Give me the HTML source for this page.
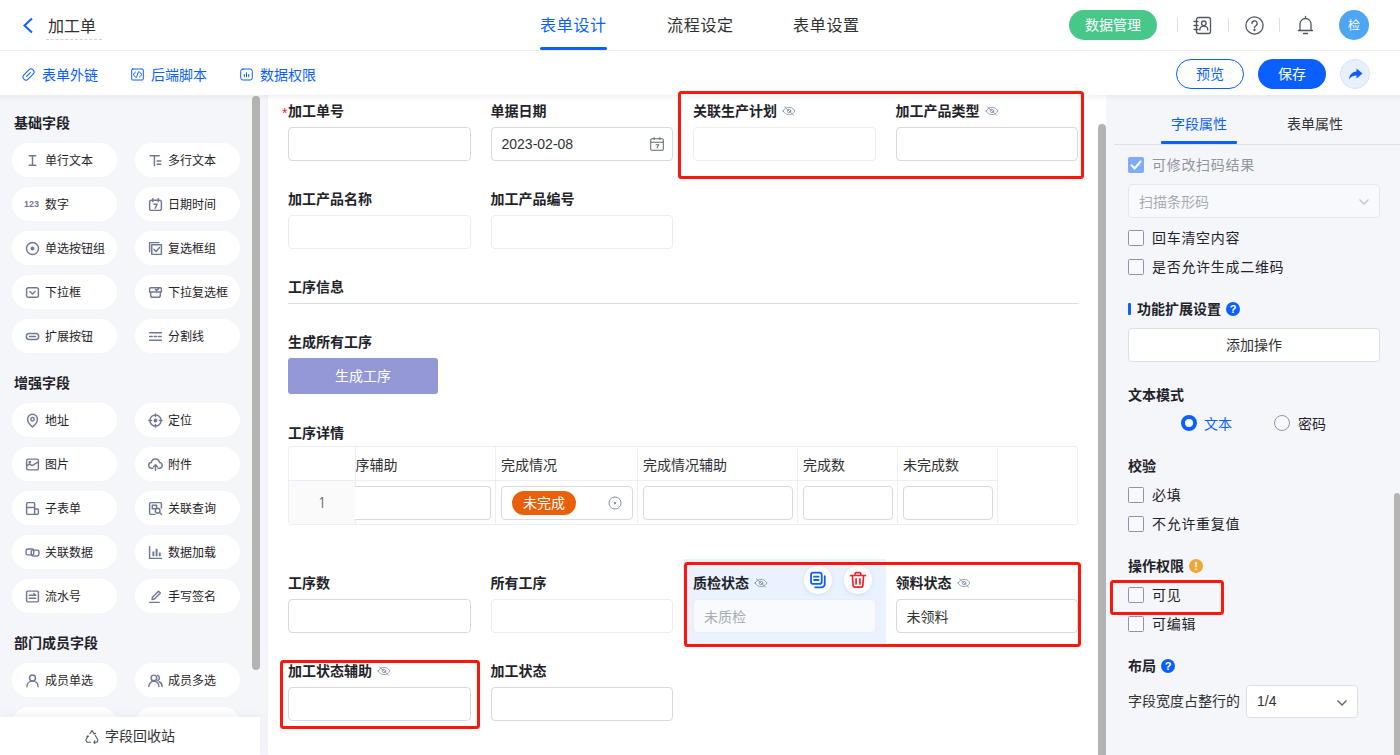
<!DOCTYPE html>
<html lang="zh-CN">
<head>
<meta charset="utf-8">
<title>加工单</title>
<style>
*{box-sizing:border-box;margin:0;padding:0}
html,body{width:1400px;height:755px;overflow:hidden}
body{font-family:"Liberation Sans","Noto Sans CJK SC",sans-serif;font-size:14px;color:#1f2329;background:#f5f6fa;position:relative}
.abs{position:absolute}
/* header */
#hdr{position:absolute;left:0;top:0;width:1400px;height:51px;background:#fff;border-bottom:1px solid #eeeff1}
#hdr .title{position:absolute;left:46px;top:12px;width:56px;height:28px;line-height:29px;font-size:16px;color:#303133;padding:0 2px;border-bottom:1px dashed #d0d3d9}
.tab{position:absolute;top:0;height:50px;line-height:52.500px;font-size:16px;color:#303133;white-space:nowrap;letter-spacing:.7px}
.tab.on{color:#0b5fff}
.tab.on:after{content:"";position:absolute;left:0;right:0;bottom:0;height:3px;background:#0b5fff;border-radius:2px}
#dm{position:absolute;left:1069px;top:10px;width:88px;height:30px;border-radius:15px;background:#48c78a;color:#fff;font-size:14px;line-height:31.500px;text-align:center}
.vsep{position:absolute;top:18px;width:1px;height:14px;background:#dcdfe6}
#ava{position:absolute;left:1339px;top:10px;width:30px;height:30px;border-radius:50%;background:#4ea5f2;color:#fff;font-size:12px;line-height:33px;text-align:center}
/* toolbar */
#tb{position:absolute;left:0;top:51px;width:1400px;height:44px;background:#fff}
#shd{position:absolute;left:0;top:95px;width:1400px;height:6px;background:linear-gradient(rgba(0,0,0,.045),rgba(0,0,0,0))}
.lnk{position:absolute;top:0;height:45px;line-height:48px;color:#0b5fff;font-size:14px;white-space:nowrap}
.lnk svg{position:absolute;left:-20px;top:17px}
#pv{position:absolute;left:1176px;top:8px;width:68px;height:30px;border-radius:15px;border:1px solid #0b5fff;color:#0b5fff;line-height:28px;text-align:center;background:#fff}
#sv{position:absolute;left:1258px;top:8px;width:68px;height:30px;border-radius:15px;background:#0b5fff;color:#fff;line-height:30px;text-align:center}
#sh{position:absolute;left:1340px;top:8px;width:30px;height:30px;border-radius:50%;background:#e8f0ff;border:1px solid #d5e3ff}
/* left */
#left{position:absolute;left:0;top:96px;width:260px;height:659px;overflow:hidden}
#left h4{position:absolute;left:14px;font-size:14px;font-weight:bold;color:#1f2329;line-height:20px}
.pill{position:absolute;width:105px;height:34px;border-radius:17px;background:#fff;font-size:12px;line-height:34px;color:#1f2329;padding-left:33px;padding-top:1px;white-space:nowrap}
.pill svg{position:absolute;left:12.500px;top:9.500px}
#lsb{position:absolute;left:252px;top:96px;width:8px;height:574px;border-radius:4px;background:#b3b3b3}
#recy{position:absolute;left:0;top:717px;width:260px;height:38px;background:#fff;font-size:14px;line-height:39px;color:#303133;box-shadow:0 -3px 8px rgba(0,0,0,.045)}
/* canvas */
#cv{position:absolute;left:268px;top:95px;width:838px;height:660px;background:#fff;box-shadow:-2px 0 4px rgba(0,0,0,.02)}
#csb{position:absolute;left:1098px;top:124px;width:8px;height:640px;border-radius:4px;background:#b3b3b3}
.lab{position:absolute;font-size:14px;font-weight:bold;color:#1f2329;line-height:20px;white-space:nowrap}
.inp{position:absolute;width:182.500px;height:34px;border:1px solid #d9dadd;border-radius:4px;background:#fff;font-size:14px;line-height:32px;padding-left:10px;color:#303133}
.inp.lt{border-color:#ebedf0}
.eye{margin-left:5px;vertical-align:0}
.cj{position:relative;top:1px}
.th{font-size:14px;line-height:20px;color:#303133;white-space:nowrap}
.tag{position:absolute;left:10px;top:4px;width:64px;height:24px;border-radius:12px;background:#e8600a;color:#fff;line-height:25px;text-align:center;font-size:14px}
.red{position:absolute;border:3px solid #fd160e;border-radius:3.500px;z-index:10}
/* right */
#right{position:absolute;left:1106px;top:95px;width:294px;height:660px;background:#f5f6fa}
#right .abs{white-space:nowrap}
.cb{position:absolute;left:1128px;width:16px;height:16px;border:1px solid #8d94b0;border-radius:1.500px;background:#f8f9fc}
.cbl{position:absolute;left:1152px;font-size:14px;line-height:20px;color:#1f2329;white-space:nowrap;letter-spacing:.7px}
.h5{position:absolute;left:1128px;font-size:14px;font-weight:bold;line-height:20px;color:#1f2329;white-space:nowrap}
</style>
</head>
<body>
<div id="hdr">
  <svg class="abs" style="left:22px;top:17px" width="12" height="17" viewBox="0 0 12 17"><path d="M10 1.5 L2.5 8.5 L10 15.5" fill="none" stroke="#0b5fff" stroke-width="2"/></svg>
  <div class="title">加工单</div>
  <div class="tab on" style="left:540px">表单设计</div>
  <div class="tab" style="left:667px">流程设定</div>
  <div class="tab" style="left:793px">表单设置</div>
  <div id="dm">数据管理</div>
  <div class="vsep" style="left:1177px"></div>
  <div class="vsep" style="left:1228px"></div>
  <div class="vsep" style="left:1279px"></div>
  <svg class="abs" style="left:1193px;top:16px" width="19" height="19" viewBox="0 0 19 19" fill="none" stroke="#4e5564" stroke-width="1.300" stroke-linecap="round" stroke-linejoin="round"><rect x="3.500" y="1.500" width="14" height="16" rx="2"/><path d="M1 5.500h4M1 9.500h4M1 13.500h4"/><circle cx="10.800" cy="7.300" r="2.300"/><path d="M6.800 14c0-2.400 1.700-3.900 4-3.900s4 1.500 4 3.900"/></svg>
  <svg class="abs" style="left:1245px;top:16px" width="19" height="19" viewBox="0 0 19 19" fill="none" stroke="#4e5564" stroke-width="1.300" stroke-linecap="round" stroke-linejoin="round"><circle cx="9.500" cy="9.500" r="8.600"/><path d="M6.900 7.600a2.600 2.600 0 1 1 3.900 2.200c-.8.500-1.300 1-1.300 2"/><circle cx="9.500" cy="14" r=".5" fill="#4e5564"/></svg>
  <svg class="abs" style="left:1296px;top:15px" width="19" height="20" viewBox="0 0 19 20" fill="none" stroke="#4e5564" stroke-width="1.300" stroke-linecap="round" stroke-linejoin="round"><path d="M2.500 15.500h14M4 15.500v-6.500a5.500 5.500 0 0 1 11 0v6.500M9.500 1.500v2M7.500 18.500h4"/></svg>
  <div id="ava">检</div>
</div>
<div id="tb">
  <div class="lnk" style="left:42px"><svg width="13" height="13" viewBox="0 0 13 13" fill="none" stroke="#0b5fff" stroke-width="1" stroke-linecap="round"><g transform="rotate(-45 6.500 6.500)"><rect x="0" y="3.500" width="13" height="6" rx="3"/><path d="M3.800 6.500h5.400"/></g></svg>表单外链</div>
  <div class="lnk" style="left:151px"><svg width="13" height="13" viewBox="0 0 13 13" fill="none" stroke="#0b5fff" stroke-width="1" stroke-linecap="round" stroke-linejoin="round"><rect x=".7" y="1" width="11.600" height="11" rx="1"/><path d="M4.600 4l-2.600 2.500 2.600 2.500M8.400 4l2.600 2.500-2.600 2.500M7.500 3.800l-2 5.400"/></svg>后端脚本</div>
  <div class="lnk" style="left:260px"><svg width="13" height="13" viewBox="0 0 13 13" fill="none" stroke="#0b5fff" stroke-width="1" stroke-linecap="round" stroke-linejoin="round"><rect x=".7" y="1" width="11.600" height="11" rx="2.200"/><path d="M4.300 6.500v2.300M6.500 4.800v4M8.700 6.500v2.300"/></svg>数据权限</div>
  <div id="pv">预览</div>
  <div id="sv">保存</div>
  <div id="sh"><svg class="abs" style="left:7px;top:7px" width="15" height="15" viewBox="0 0 15 15"><path d="M8.500 1.500l6 5-6 5v-3c-3.500 0-6 1.200-7.500 4 .3-4.500 3-7.600 7.500-8z" fill="#0b5fff"/></svg></div>
</div>
<div id="shd" style="z-index:5"></div>
<div id="left">
<h4 style="top:17px">基础字段</h4>
<div class="pill" style="left:12px;top:47px"><svg width="15" height="15" viewBox="0 0 14 14" fill="none" stroke="#717895" stroke-width="1.35" stroke-linecap="round" stroke-linejoin="round"><path d="M4 2.5h6M7 2.5v9M4 11.5h6"/></svg>单行文本</div>
<div class="pill" style="left:135px;top:47px"><svg width="15" height="15" viewBox="0 0 14 14" fill="none" stroke="#717895" stroke-width="1.35" stroke-linecap="round" stroke-linejoin="round"><path d="M2 2.5h8.5M6 2.5v9.5M8.5 7.5h3.5M8.5 10.5h3.5"/></svg>多行文本</div>
<div class="pill" style="left:12px;top:91px"><b style="position:absolute;left:12px;top:0;font-size:9px;font-weight:bold;color:#717895;letter-spacing:0">123</b>数字</div>
<div class="pill" style="left:135px;top:91px"><svg width="15" height="15" viewBox="0 0 14 14" fill="none" stroke="#717895" stroke-width="1.35" stroke-linecap="round" stroke-linejoin="round"><path d="M3 3h8a1.5 1.5 0 0 1 1.5 1.5v6.5a1.5 1.5 0 0 1-1.5 1.5h-8a1.5 1.5 0 0 1-1.5-1.5v-6.5a1.5 1.5 0 0 1 1.5-1.5zM4.5 1.5v3M9.5 1.5v3M5.5 6.8h3l-1.8 3.7"/></svg>日期时间</div>
<div class="pill" style="left:12px;top:135px"><svg width="15" height="15" viewBox="0 0 14 14" fill="none" stroke="#717895" stroke-width="1.35" stroke-linecap="round" stroke-linejoin="round"><circle cx="7" cy="7" r="5.6"/><circle cx="7" cy="7" r="1.2" fill="#717895"/></svg>单选按钮组</div>
<div class="pill" style="left:135px;top:135px"><svg width="15" height="15" viewBox="0 0 14 14" fill="none" stroke="#717895" stroke-width="1.35" stroke-linecap="round" stroke-linejoin="round"><path d="M3.5 3.5h9v9h-9zM1.5 10v-8.5h8.5M5.5 7.8l2 2 3.2-3.8"/></svg>复选框组</div>
<div class="pill" style="left:12px;top:179px"><svg width="15" height="15" viewBox="0 0 14 14" fill="none" stroke="#717895" stroke-width="1.35" stroke-linecap="round" stroke-linejoin="round"><path d="M3 2.5h8a1.5 1.5 0 0 1 1.5 1.5v6a1.5 1.5 0 0 1-1.5 1.5h-8a1.5 1.5 0 0 1-1.5-1.5v-6a1.5 1.5 0 0 1 1.5-1.5zM4.6 6l2.4 2.4 2.4-2.4"/></svg>下拉框</div>
<div class="pill" style="left:135px;top:179px"><svg width="15" height="15" viewBox="0 0 14 14" fill="none" stroke="#717895" stroke-width="1.35" stroke-linecap="round" stroke-linejoin="round"><path d="M2.5 2.5h9a1 1 0 0 1 1 1v3h-11v-3a1 1 0 0 1 1-1zM2.5 6.5v3a2 2 0 0 0 2 2h5a2 2 0 0 0 2-2v-3M7 4.2l1 1 1.8-1.6"/></svg>下拉复选框</div>
<div class="pill" style="left:12px;top:223px"><svg width="15" height="15" viewBox="0 0 14 14" fill="none" stroke="#717895" stroke-width="1.35" stroke-linecap="round" stroke-linejoin="round"><rect x="1.2" y="4.2" width="11.6" height="5.6" rx="2.8"/><path d="M4.2 7h5.6"/></svg>扩展按钮</div>
<div class="pill" style="left:135px;top:223px"><svg width="15" height="15" viewBox="0 0 14 14" fill="none" stroke="#717895" stroke-width="1.35" stroke-linecap="round" stroke-linejoin="round"><path d="M1.5 3.5h11M1.5 10.5h11"/><path d="M1.5 7h11" stroke-dasharray="2.4 1.8"/></svg>分割线</div>
<h4 style="top:277px">增强字段</h4>
<div class="pill" style="left:12px;top:307px"><svg width="15" height="15" viewBox="0 0 14 14" fill="none" stroke="#717895" stroke-width="1.35" stroke-linecap="round" stroke-linejoin="round"><path d="M7 13s-4.6-3.6-4.6-7.2a4.6 4.6 0 0 1 9.2 0c0 3.600-4.600 7.200-4.600 7.200z"/><circle cx="7" cy="5.800" r="1.600"/></svg>地址</div>
<div class="pill" style="left:135px;top:307px"><svg width="15" height="15" viewBox="0 0 14 14" fill="none" stroke="#717895" stroke-width="1.35" stroke-linecap="round" stroke-linejoin="round"><circle cx="7" cy="7" r="5.200"/><circle cx="7" cy="7" r="1.100" fill="#717895"/><path d="M7 .8v2.600M7 10.600v2.600M.8 7h2.600M10.600 7h2.600"/></svg>定位</div>
<div class="pill" style="left:12px;top:351px"><svg width="15" height="15" viewBox="0 0 14 14" fill="none" stroke="#717895" stroke-width="1.35" stroke-linecap="round" stroke-linejoin="round"><path d="M3 2h8a1.500 1.500 0 0 1 1.500 1.500v7a1.500 1.500 0 0 1-1.500 1.500h-8a1.500 1.500 0 0 1-1.500-1.500v-7a1.500 1.500 0 0 1 1.500-1.500zM1.500 8.500l2.500-2 2.500 1.500 6-3.500"/><circle cx="4.500" cy="4.800" r=".6" fill="#717895"/></svg>图片</div>
<div class="pill" style="left:135px;top:351px"><svg width="15" height="15" viewBox="0 0 14 14" fill="none" stroke="#717895" stroke-width="1.35" stroke-linecap="round" stroke-linejoin="round"><path d="M4.500 10.500h-1a2.700 2.700 0 0 1-.3-5.400a3.800 3.800 0 0 1 7.500 0a2.700 2.700 0 0 1-.2 5.400h-1M7 12.500v-5M5.200 9l1.800-1.800 1.800 1.800"/></svg>附件</div>
<div class="pill" style="left:12px;top:395px"><svg width="15" height="15" viewBox="0 0 14 14" fill="none" stroke="#717895" stroke-width="1.35" stroke-linecap="round" stroke-linejoin="round"><path d="M2.500 1.500h5.500a1 1 0 0 1 1 1v10h-6.500a1 1 0 0 1-1-1v-9a1 1 0 0 1 1-1zM1.500 6h7.500M9 7.500h2.500a1 1 0 0 1 1 1v3a1 1 0 0 1-1 1h-2.500"/></svg>子表单</div>
<div class="pill" style="left:135px;top:395px"><svg width="15" height="15" viewBox="0 0 14 14" fill="none" stroke="#717895" stroke-width="1.35" stroke-linecap="round" stroke-linejoin="round"><path d="M12.500 6.500v-4a1 1 0 0 0-1-1h-9a1 1 0 0 0-1 1v9a1 1 0 0 0 1 1h4M4 4h4v3.200h-4z"/><circle cx="9" cy="9" r="2.200"/><path d="M10.700 10.700l2 2"/></svg>关联查询</div>
<div class="pill" style="left:12px;top:439px"><svg width="15" height="15" viewBox="0 0 14 14" fill="none" stroke="#717895" stroke-width="1.35" stroke-linecap="round" stroke-linejoin="round"><rect x="1" y="3.800" width="7.200" height="5.400" rx="1.600"/><rect x="5.800" y="4.800" width="7.200" height="5.400" rx="1.600"/></svg>关联数据</div>
<div class="pill" style="left:135px;top:439px"><svg width="15" height="15" viewBox="0 0 14 14" fill="none" stroke="#717895" stroke-width="1.35" stroke-linecap="round" stroke-linejoin="round"><path d="M1.500 1.500v11h11"/><path d="M5 6v4.500M8 3.500v7M11 7v3.500" stroke-width="1.800" stroke-linecap="butt"/></svg>数据加载</div>
<div class="pill" style="left:12px;top:483px"><svg width="15" height="15" viewBox="0 0 14 14" fill="none" stroke="#717895" stroke-width="1.35" stroke-linecap="round" stroke-linejoin="round"><path d="M2.500 2h9a1 1 0 0 1 1 1v8a1 1 0 0 1-1 1h-9a1 1 0 0 1-1-1v-8a1 1 0 0 1 1-1zM4 5.800h6M4 8.600h6M8.300 4.200l1.700 1.600"/></svg>流水号</div>
<div class="pill" style="left:135px;top:483px"><svg width="15" height="15" viewBox="0 0 14 14" fill="none" stroke="#717895" stroke-width="1.35" stroke-linecap="round" stroke-linejoin="round"><path d="M1.500 12.500h9M3.800 9.800l.4-2.200 5.600-5.600 1.800 1.800-5.600 5.600z"/></svg>手写签名</div>
<h4 style="top:537px">部门成员字段</h4>
<div class="pill" style="left:12px;top:567px"><svg width="15" height="15" viewBox="0 0 14 14" fill="none" stroke="#717895" stroke-width="1.35" stroke-linecap="round" stroke-linejoin="round"><circle cx="7" cy="4.600" r="2.800"/><path d="M1.800 12.800c0-3.200 2.300-5.200 5.200-5.200s5.200 2 5.200 5.200"/></svg>成员单选</div>
<div class="pill" style="left:135px;top:567px"><svg width="15" height="15" viewBox="0 0 14 14" fill="none" stroke="#717895" stroke-width="1.35" stroke-linecap="round" stroke-linejoin="round"><circle cx="5.500" cy="4.600" r="2.600"/><path d="M.8 12.600c0-3 2.100-4.900 4.700-4.900s4.700 1.900 4.700 4.900M9 2.200a2.600 2.600 0 0 1 0 4.800M10.300 8.200c1.700.6 2.900 2.100 2.900 4.400"/></svg>成员多选</div>
<div class="pill" style="left:12px;top:611px"></div><div class="pill" style="left:135px;top:611px"></div>
</div>
<div id="lsb"></div>
<div id="recy"><svg class="abs" style="left:84px;top:12px" width="16" height="15" viewBox="0 0 16 15" fill="none" stroke="#4e5564" stroke-width="1.100" stroke-linecap="round" stroke-linejoin="round"><path d="M6 4.500l2-3 2 3.200M11.300 6.500l2.700 4.500-1 2.200h-3M6.500 13.200h-3.500l-1.200-2.200 2.300-4M9.500 3.600l.8 1.300 1.400-.6M4.700 7.200l-1.500-.1-.3 1.500M10.800 11.800l-.9 1.400.9 1.300"/></svg><span class="abs" style="left:105px;top:0">字段回收站</span></div>
<div id="cv"></div>
<!--CV-->
<div class="abs" style="left:683px;top:559px;width:203px;height:87px;background:#eaf2ff"></div>
<div class="lab" style="left:288px;top:101px"><span style="color:#f5222d;position:absolute;left:-6px;top:2px;font-weight:normal">*</span>加工单号</div>
<div class="inp " style="left:288px;top:127px;width:182.5px;"></div>
<div class="lab" style="left:490.5px;top:101px">单据日期</div>
<div class="inp " style="left:490.5px;top:127px;width:182.5px;">2023-02-08<svg class="abs" style="right:7px;top:8px" width="16" height="16" viewBox="0 0 14 14" fill="none" stroke="#5f6676" stroke-width=".9"><path d="M2.500 2.500h9a1 1 0 0 1 1 1v8a1 1 0 0 1-1 1h-9a1 1 0 0 1-1-1v-8a1 1 0 0 1 1-1zM4.500 1v2.500M9.500 1v2.500M1.500 5.500h11M5.800 7.600h2.600l-1.500 3.200"/></svg></div>
<div class="lab" style="left:693px;top:101px">关联生产计划<svg class="eye" width="14" height="10" viewBox="0 0 15 11" fill="none" stroke="#8d97ab" stroke-width="1" stroke-linecap="round"><path d="M1 5.500c1.600-2.700 3.800-4 6.500-4s4.900 1.300 6.500 4c-1.600 2.700-3.800 4-6.500 4s-4.900-1.300-6.500-4z"/><circle cx="7.500" cy="5.500" r="2"/><path d="M2.500 1l10 9"/></svg></div>
<div class="inp lt" style="left:693px;top:127px;width:182.5px;"></div>
<div class="lab" style="left:895.5px;top:101px">加工产品类型<svg class="eye" width="14" height="10" viewBox="0 0 15 11" fill="none" stroke="#8d97ab" stroke-width="1" stroke-linecap="round"><path d="M1 5.500c1.600-2.700 3.800-4 6.500-4s4.900 1.300 6.500 4c-1.600 2.700-3.800 4-6.500 4s-4.900-1.300-6.500-4z"/><circle cx="7.500" cy="5.500" r="2"/><path d="M2.500 1l10 9"/></svg></div>
<div class="inp " style="left:895.5px;top:127px;width:182.5px;"></div>
<div class="lab" style="left:288px;top:189px">加工产品名称</div>
<div class="inp lt" style="left:288px;top:215px;width:182.5px;"></div>
<div class="lab" style="left:490.5px;top:189px">加工产品编号</div>
<div class="inp lt" style="left:490.5px;top:215px;width:182.5px;"></div>
<div class="lab" style="left:288px;top:277px">工序信息</div>
<div class="abs" style="left:288px;top:303px;width:790px;height:1px;background:#dcdde1"></div>
<div class="lab" style="left:288px;top:332px">生成所有工序</div>
<div class="abs" style="left:288px;top:358px;width:150px;height:36px;border-radius:3px;background:#9499d5;color:#fff;font-size:14px;line-height:36px;text-align:center">生成工序</div>
<div class="lab" style="left:288px;top:423px">工序详情</div>
<div class="abs" style="left:288px;top:446px;width:790px;height:79px;border:1px solid #ebeef5;border-radius:3px"></div>
<div class="abs" style="left:289px;top:480px;width:709px;height:1px;background:#ebeef5"></div>
<div class="abs" style="left:289px;top:481px;width:66px;height:43px;background:#fafafa"></div>
<div class="abs" style="left:355px;top:447px;width:1px;height:77px;background:#ebeef5"></div>
<div class="abs" style="left:495px;top:447px;width:1px;height:77px;background:#ebeef5"></div>
<div class="abs" style="left:637px;top:447px;width:1px;height:77px;background:#ebeef5"></div>
<div class="abs" style="left:797px;top:447px;width:1px;height:77px;background:#ebeef5"></div>
<div class="abs" style="left:897px;top:447px;width:1px;height:77px;background:#ebeef5"></div>
<div class="abs" style="left:997px;top:447px;width:1px;height:77px;background:#ebeef5"></div>
<div class="abs th" style="left:355.5px;top:455px">序辅助</div>
<div class="abs th" style="left:501px;top:455px">完成情况</div>
<div class="abs th" style="left:643px;top:455px">完成情况辅助</div>
<div class="abs th" style="left:803px;top:455px">完成数</div>
<div class="abs th" style="left:903px;top:455px">未完成数</div>
<div class="abs th" style="left:302px;top:493px;width:40px;text-align:center;color:#606266;font-family:NanumGothic,sans-serif">1</div>
<div class="inp " style="left:355px;top:486px;width:136px;border-left:none;border-radius:0 4px 4px 0"></div>
<div class="inp " style="left:501px;top:486px;width:132px;"><span class="tag">未完成</span><svg class="abs" style="left:106px;top:9px" width="14" height="14" viewBox="0 0 14 14" fill="none" stroke="#8a919f" stroke-width="1"><circle cx="7" cy="7" r="6"/><circle cx="7" cy="7" r="1.200" fill="#8a919f" stroke="none"/></svg></div>
<div class="inp " style="left:643px;top:486px;width:150px;"></div>
<div class="inp " style="left:803px;top:486px;width:90px;"></div>
<div class="inp " style="left:903px;top:486px;width:90px;"></div>
<div class="lab" style="left:288px;top:573px">工序数</div>
<div class="inp " style="left:288px;top:599px;width:182.5px;"></div>
<div class="lab" style="left:490.5px;top:573px">所有工序</div>
<div class="inp lt" style="left:490.5px;top:599px;width:182.5px;"></div>
<div class="lab" style="left:693px;top:573px">质检状态<svg class="eye" width="14" height="10" viewBox="0 0 15 11" fill="none" stroke="#8d97ab" stroke-width="1" stroke-linecap="round"><path d="M1 5.500c1.600-2.700 3.800-4 6.500-4s4.900 1.300 6.500 4c-1.600 2.700-3.800 4-6.500 4s-4.900-1.300-6.500-4z"/><circle cx="7.500" cy="5.500" r="2"/><path d="M2.500 1l10 9"/></svg></div>
<div class="inp lt" style="left:693px;top:599px;width:182.5px;background:#f8fafd"><span class="cj" style="color:#a8abb2">未质检</span></div>
<div class="lab" style="left:895.5px;top:573px">领料状态<svg class="eye" width="14" height="10" viewBox="0 0 15 11" fill="none" stroke="#8d97ab" stroke-width="1" stroke-linecap="round"><path d="M1 5.500c1.600-2.700 3.800-4 6.500-4s4.900 1.300 6.500 4c-1.600 2.700-3.800 4-6.500 4s-4.900-1.300-6.500-4z"/><circle cx="7.500" cy="5.500" r="2"/><path d="M2.500 1l10 9"/></svg></div>
<div class="inp " style="left:895.5px;top:599px;width:182.5px;"><span class="cj">未领料</span></div>
<div class="lab" style="left:288px;top:661px">加工状态辅助<svg class="eye" width="14" height="10" viewBox="0 0 15 11" fill="none" stroke="#8d97ab" stroke-width="1" stroke-linecap="round"><path d="M1 5.500c1.600-2.700 3.800-4 6.500-4s4.900 1.300 6.500 4c-1.600 2.700-3.800 4-6.500 4s-4.900-1.300-6.500-4z"/><circle cx="7.500" cy="5.500" r="2"/><path d="M2.500 1l10 9"/></svg></div>
<div class="inp " style="left:288px;top:687px;width:182.5px;"></div>
<div class="lab" style="left:490.5px;top:661px">加工状态</div>
<div class="inp " style="left:490.5px;top:687px;width:182.5px;"></div>
<div class="abs" style="left:804px;top:566px;width:28px;height:28px;border-radius:50%;background:#fff;box-shadow:0 1px 4px rgba(11,95,255,.12)"><svg class="abs" style="left:5px;top:5px" width="18" height="18" viewBox="0 0 16 16" fill="none" stroke="#0b5fff" stroke-width="1.600" stroke-linecap="round" stroke-linejoin="round"><rect x="1.800" y="1.500" width="9.500" height="10" rx="2"/><path d="M4.500 5h4M4.500 8h4M14 4.500v7a3 3 0 0 1-3 3h-5.500"/></svg></div>
<div class="abs" style="left:844px;top:566px;width:28px;height:28px;border-radius:50%;background:#fff;box-shadow:0 1px 4px rgba(11,95,255,.12)"><svg class="abs" style="left:5px;top:5px" width="18" height="18" viewBox="0 0 16 16" fill="none" stroke="#f5222d" stroke-width="1.500" stroke-linecap="round" stroke-linejoin="round"><path d="M1.500 4h13M5.500 4v-1.500a1 1 0 0 1 1-1h3a1 1 0 0 1 1 1v1.500M3 4l.7 9a1.500 1.500 0 0 0 1.500 1.400h5.600a1.500 1.500 0 0 0 1.500-1.400l.7-9M6.300 7v4.500M9.700 7v4.500"/></svg></div>
<div class="red" style="left:678px;top:91px;width:406px;height:88px"></div>
<div class="red" style="left:684px;top:562px;width:397px;height:85px"></div>
<div class="red" style="left:280px;top:660px;width:200px;height:69px"></div>
<!--/CV-->
<div id="csb"></div>
<div id="right"></div>
<!--RP-->
<div class="abs" style="left:1171px;top:114px;font-size:14px;line-height:20px;color:#0b5fff">字段属性</div>
<div class="abs" style="left:1287px;top:114px;font-size:14px;line-height:20px;color:#303133">表单属性</div>
<div class="abs" style="left:1114px;top:144px;width:286px;height:1px;background:#dfe1e6"></div>
<div class="abs" style="left:1161px;top:141px;width:76px;height:3px;background:#0b5fff;border-radius:1px"></div>
<div class="cb" style="top:157px;background:#80abfb;border-color:#80abfb"><svg class="abs" style="left:0;top:0" width="14" height="14" viewBox="0 0 14 14" fill="none" stroke="#fff" stroke-width="2"><path d="M2 6.800l3.600 3.700 6.400-7.500"/></svg></div>
<div class="cbl" style="top:155px;color:#8f959e">可修改扫码结果</div>
<div class="abs" style="left:1128px;top:184px;width:252px;height:34px;border:1px solid #e4e7ed;border-radius:4px;background:#f8f9fc;color:#a8abb2;font-size:14px;line-height:34px;padding-left:10px">扫描条形码<svg class="abs" style="right:9px;top:13px" width="12" height="8" viewBox="0 0 12 8" fill="none" stroke="#c0c4cc" stroke-width="1.300"><path d="M1.500 1.500l4.500 4.500 4.500-4.500"/></svg></div>
<div class="cb" style="top:230px"></div>
<div class="cbl" style="top:228px">回车清空内容</div>
<div class="cb" style="top:259px"></div>
<div class="cbl" style="top:257px">是否允许生成二维码</div>
<div class="abs" style="left:1128px;top:303px;width:3px;height:12px;background:#0b5fff;border-radius:1px"></div>
<div class="h5" style="left:1137px;top:299px">功能扩展设置</div>
<div class="abs" style="left:1226px;top:302px;width:14px;height:14px;border-radius:50%;background:#0b5fff;color:#fff;font-size:11px;font-weight:bold;line-height:14px;text-align:center">?</div>
<div class="abs" style="left:1128px;top:328px;width:252px;height:34px;border:1px solid #dcdfe6;border-radius:4px;background:#fff;font-size:14px;line-height:33px;text-align:center;color:#303133">添加操作</div>
<div class="h5" style="left:1128px;top:385px">文本模式</div>
<div class="abs" style="left:1181px;top:415px;width:16px;height:16px;border-radius:50%;border:4.500px solid #0b5fff;background:#fff"></div>
<div class="abs" style="left:1204px;top:414px;font-size:14px;line-height:20px;color:#0b5fff">文本</div>
<div class="abs" style="left:1274px;top:415px;width:16px;height:16px;border-radius:50%;border:1px solid #8d94b0;background:#f8f9fc"></div>
<div class="abs" style="left:1298px;top:414px;font-size:14px;line-height:20px;color:#1f2329">密码</div>
<div class="h5" style="left:1128px;top:456px">校验</div>
<div class="cb" style="top:487px"></div>
<div class="cbl" style="top:485px">必填</div>
<div class="cb" style="top:516px"></div>
<div class="cbl" style="top:514px">不允许重复值</div>
<div class="h5" style="left:1128px;top:556px">操作权限</div>
<div class="abs" style="left:1189px;top:559px;width:14px;height:14px;border-radius:50%;background:#f0a73a;color:#fff;font-size:11px;font-weight:bold;line-height:14px;text-align:center">!</div>
<div class="cb" style="top:587px"></div>
<div class="cbl" style="top:585px">可见</div>
<div class="cb" style="top:616px"></div>
<div class="cbl" style="top:614px">可编辑</div>
<div class="red" style="left:1110px;top:580px;width:114px;height:35px"></div>
<div class="h5" style="left:1128px;top:656px">布局</div>
<div class="abs" style="left:1161px;top:659px;width:14px;height:14px;border-radius:50%;background:#0b5fff;color:#fff;font-size:11px;font-weight:bold;line-height:14px;text-align:center">?</div>
<div class="abs" style="left:1128px;top:691px;font-size:14px;line-height:20px;color:#303133">字段宽度占整行的</div>
<div class="abs" style="left:1246px;top:685px;width:112px;height:33px;border:1px solid #dcdfe6;border-radius:4px;background:#fff;color:#303133;font-size:14px;line-height:31px;padding-left:10px">1/4<svg class="abs" style="right:9px;top:13px" width="12" height="8" viewBox="0 0 12 8" fill="none" stroke="#606266" stroke-width="1.300"><path d="M1.500 1.500l4.500 4.500 4.500-4.500"/></svg></div>
<div class="abs" style="left:1394px;top:493px;width:6px;height:270px;border-radius:3px;background:#b4b4b4"></div>
<!--/RP-->
</body>
</html>
